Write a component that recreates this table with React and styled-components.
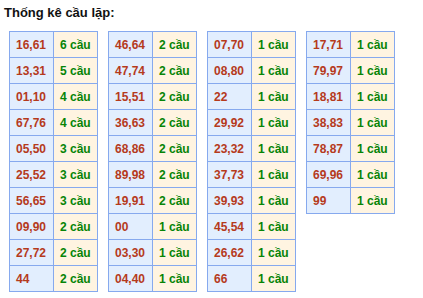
import React from 'react';
import styled, { createGlobalStyle } from 'styled-components';

const GlobalStyle = createGlobalStyle`
  body {
    margin: 0;
    background: #fff;
    font-family: "Liberation Sans", Arial, sans-serif;
  }
`;

const Wrapper = styled.div`
  padding: 5px 4px;
`;

const Title = styled.div`
  font-size: 13px;
  font-weight: bold;
  color: #111;
  line-height: 15px;
  margin-bottom: 11px;
`;

const Groups = styled.div`
  display: flex;
  align-items: flex-start;
  gap: 10px;
  padding-left: 5px;
`;

const Table = styled.table`
  width: 89px;
  table-layout: fixed;
  border-collapse: collapse;
  border: 1px solid #86a9ee;
`;

const Row = styled.tr`
  height: 26px;
`;

const Cell = styled.td`
  padding: 0 0 0 6px;
  border: 1px solid #86a9ee;
  font-size: 12px;
  font-weight: bold;
  text-align: left;
  white-space: nowrap;
  background: ${props => (props.count ? '#fff4e1' : '#e2eefe')};
  color: ${props => (props.count ? '#078407' : '#b53a1c')};
`;

const groups = [
  [['16,61', 6], ['13,31', 5], ['01,10', 4], ['67,76', 4], ['05,50', 3], ['25,52', 3], ['56,65', 3], ['09,90', 2], ['27,72', 2], ['44', 2]],
  [['46,64', 2], ['47,74', 2], ['15,51', 2], ['36,63', 2], ['68,86', 2], ['89,98', 2], ['19,91', 2], ['00', 1], ['03,30', 1], ['04,40', 1]],
  [['07,70', 1], ['08,80', 1], ['22', 1], ['29,92', 1], ['23,32', 1], ['37,73', 1], ['39,93', 1], ['45,54', 1], ['26,62', 1], ['66', 1]],
  [['17,71', 1], ['79,97', 1], ['18,81', 1], ['38,83', 1], ['78,87', 1], ['69,96', 1], ['99', 1]],
];

const App = () => (
  <Wrapper>
    <GlobalStyle />
    <Title>Thống kê cầu lặp:</Title>
    <Groups>
      {groups.map((rows, gi) => (
        <Table key={gi}>
          <tbody>
            {rows.map(([pair, n]) => (
              <Row key={pair}>
                <Cell>{pair}</Cell>
                <Cell count>{n} cầu</Cell>
              </Row>
            ))}
          </tbody>
        </Table>
      ))}
    </Groups>
  </Wrapper>
);

export default App;
